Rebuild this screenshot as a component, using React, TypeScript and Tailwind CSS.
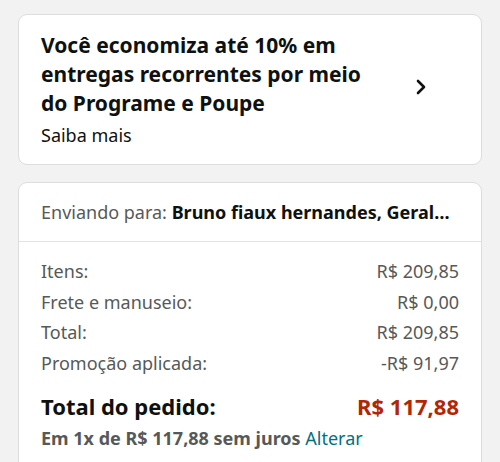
import { ChevronRight } from 'lucide-react';

const rows = [
  { label: 'Itens:', value: 'R$ 209,85' },
  { label: 'Frete e manuseio:', value: 'R$ 0,00' },
  { label: 'Total:', value: 'R$ 209,85' },
  { label: 'Promoção aplicada:', value: '-R$ 91,97' },
];

const App = () => {
  return (
    <div
      className="bg-[#f2f2f2] px-[18px] pt-[14px] overflow-hidden h-[462px]"
      style={{ fontFamily: '"Noto Sans", "Open Sans", sans-serif' }}
    >
      {/* Subscribe & Save banner */}
      <div className="flex items-center bg-white border border-[#dddddd] rounded-[9px] pl-[22px] pr-[48px] pt-[16px] pb-[16px]">
        <div className="flex-1">
          <h2 className="text-[21px] leading-[29px] font-bold text-[#0f1111] max-w-[340px]">
            Você economiza até 10% em entregas recorrentes por meio do Programe e Poupe
          </h2>
          <p className="mt-[4px] text-[18px] leading-[26px] text-[#0f1111]">Saiba mais</p>
        </div>
        <ChevronRight size={24} strokeWidth={2.6} className="text-[#0f1111] mt-[-6px]" />
      </div>

      {/* Order summary */}
      <div className="mt-[17px] bg-white border border-[#dddddd] rounded-t-[9px]">
        <div className="px-[22px] h-[59px] flex items-center border-b border-[#e3e3e3] text-[18px] whitespace-nowrap">
          <span className="text-[#565959]">Enviando para:&nbsp;</span>
          <span className="font-bold text-[#0f1111]">Bruno fiaux hernandes, Geral…</span>
        </div>
        <div className="pl-[22px] pr-[22px] pt-[14px]">
          {rows.map((row) => (
            <div key={row.label} className="flex justify-between text-[18px] leading-[30.5px] text-[#565959]">
              <span>{row.label}</span>
              <span>{row.value}</span>
            </div>
          ))}
          <div className="flex justify-between items-center mt-[12px] text-[22px] leading-[32px] font-bold">
            <span className="text-[#0f1111]">Total do pedido:</span>
            <span className="text-[#b12704]">R$ 117,88</span>
          </div>
          <p className="text-[18px] leading-[32px] text-[#565959] font-bold">
            Em 1x de R$ 117,88 sem juros <span className="text-[#007185] font-normal">Alterar</span>
          </p>
          <div className="h-[40px]" />
        </div>
      </div>
    </div>
  );
};

export default App;
